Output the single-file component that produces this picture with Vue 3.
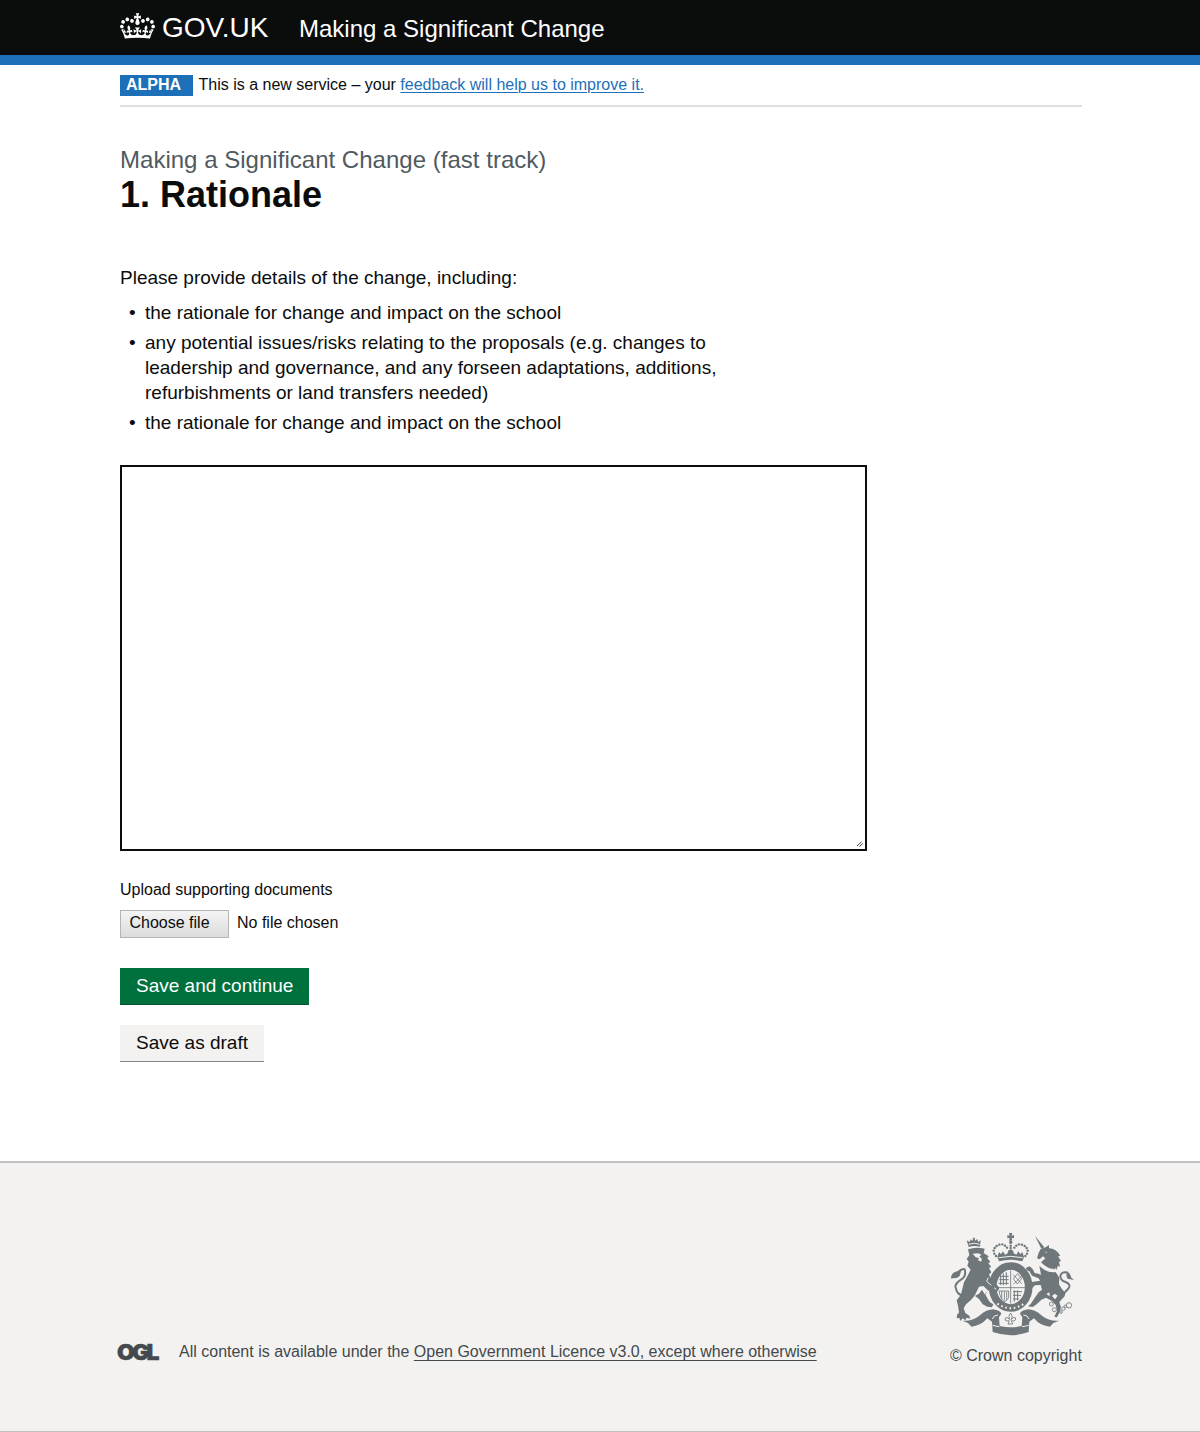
<script setup>
const points = [
  'the rationale for change and impact on the school',
  'any potential issues/risks relating to the proposals (e.g. changes to leadership and governance, and any forseen adaptations, additions, refurbishments or land transfers needed)',
  'the rationale for change and impact on the school'
]
// beads along the arches of the royal crown
const beads = [
  [163, 86], [161, 77], [164, 69], [170, 63], [178, 59], [187, 58], [195, 62], [201, 68],
  [261, 86], [263, 77], [260, 69], [254, 63], [246, 59], [237, 58], [229, 62], [223, 68],
  [212, 62], [212, 69], [212, 76], [168, 93], [256, 93]
]
</script>

<template>
  <div class="page">
    <header class="header">
      <div class="wrap header-row">
        <svg class="crown" viewBox="0 0 132 97" aria-hidden="true">
          <path fill="#fff" d="M25 30.2c3.5 1.5 7.7-.2 9.1-3.7 1.5-3.6-.2-7.8-3.9-9.2-3.6-1.4-7.6.3-9.1 3.9-1.4 3.5.3 7.5 3.9 9zM9 39.5c3.6 1.5 7.8-.2 9.2-3.7 1.5-3.6-.2-7.8-3.9-9.1-3.6-1.5-7.6.2-9.1 3.8-1.4 3.5.3 7.5 3.8 9zM4.4 57.2c3.5 1.5 7.7-.2 9.1-3.8 1.5-3.6-.2-7.7-3.9-9.1-3.5-1.5-7.6.3-9.1 3.8-1.4 3.5.3 7.6 3.9 9.1zm38.3-21.4c3.5 1.5 7.7-.2 9.1-3.8 1.5-3.6-.2-7.7-3.9-9.1-3.6-1.5-7.6.3-9.1 3.8-1.3 3.6.4 7.7 3.9 9.1zm64.4-5.6c-3.6 1.5-7.8-.2-9.1-3.7-1.5-3.6.2-7.8 3.8-9.2 3.6-1.4 7.7.3 9.2 3.9 1.3 3.5-.4 7.5-3.9 9zm15.9 9.3c-3.6 1.5-7.7-.2-9.1-3.7-1.5-3.6.2-7.8 3.7-9.1 3.6-1.5 7.7.2 9.2 3.8 1.5 3.5-.3 7.5-3.8 9zm4.7 17.7c-3.6 1.5-7.8-.2-9.2-3.8-1.5-3.6.2-7.7 3.9-9.1 3.6-1.5 7.7.3 9.2 3.8 1.3 3.5-.4 7.6-3.9 9.1zM89.3 35.8c-3.6 1.5-7.8-.2-9.2-3.8-1.4-3.6.2-7.7 3.9-9.1 3.6-1.5 7.7.3 9.2 3.8 1.4 3.6-.3 7.7-3.9 9.1zM69.7 17.7l8.9 4.7V9.3l-8.9 2.8c-.2-.3-.5-.6-.9-.9L72.4 0H59.6l3.5 11.2c-.3.3-.6.5-.9.9l-8.8-2.8v13.1l8.8-4.7c.3.3.6.7.9.9l-5 15.4v.1c-.2.8-.4 1.6-.4 2.4 0 4.1 3.1 7.5 7 8.1h.2c.3 0 .7.1 1 .1.4 0 .7 0 1-.1h.2c4-.6 7.1-4.1 7.1-8.1 0-.8-.1-1.7-.4-2.4V34l-5.1-15.4c.4-.2.7-.6 1-.9zM66 92.8c16.9 0 32.8 1.1 47.1 3.2 4-16.9 8.9-26.7 14-33.5l-9.6-3.4c1 4.9 1.1 7.2 0 10.2-1.5-1.4-3-4.3-4.2-8.7L108.6 76c2.8-2 5-3.2 7.5-3.3-4.4 9.4-10 11.9-13.6 11.2-4.3-.8-6.3-4.6-5.6-7.9 1-4.7 5.7-5.9 8-.5 4.3-8.7-3-11.4-7.6-8.8 7.1-7.2 7.9-13.5 2.1-21.1-8 6.1-8.1 12.3-4.5 20.8-4.7-5.4-12.1-2.5-9.5 6.2 3.4-5.2 7.9-2 7.2 3.1-.6 4.3-6.4 7.8-13.5 7.2-10.3-.9-10.9-8-11.2-13.8 2.5-.5 7.1 1.8 11 7.3L80.2 60c-4.1 4.4-8 5.3-12.3 5.4 1.4-4.4 8-11.6 8-11.6H55.5s6.4 7.2 7.9 11.6c-4.2-.1-8-1-12.3-5.4l1.4 16.4c3.9-5.5 8.5-7.7 10.9-7.3-.3 5.8-.9 12.8-11.1 13.8-7.2.6-12.9-2.9-13.5-7.2-.7-5 3.8-8.3 7.1-3.1 2.7-8.7-4.6-11.6-9.4-6.2 3.7-8.5 3.6-14.7-4.6-20.8-5.8 7.6-5 13.9 2.2 21.1-4.7-2.6-11.9.1-7.7 8.8 2.3-5.5 7.1-4.2 8.1.5.7 3.3-1.3 7.1-5.7 7.9-3.5.7-9-1.8-13.5-11.2 2.5.1 4.7 1.3 7.5 3.3l-4.7-15.4c-1.2 4.4-2.7 7.2-4.3 8.7-1.1-3-.9-5.3 0-10.2l-9.5 3.4c5 6.9 9.9 16.7 14 33.5 14.8-2.1 30.8-3.2 47.7-3.2z" />
        </svg>
        <span class="brand">GOV.UK</span>
        <span class="service">Making a Significant Change</span>
      </div>
    </header>

    <div class="wrap">
      <div class="phase">
        <strong class="tag">ALPHA</strong>
        <span>This is a new service – your <a>feedback will help us to improve it.</a></span>
      </div>

      <main>
        <div class="caption">Making a Significant Change (fast track)</div>
        <h1>1. Rationale</h1>
        <p class="lead">Please provide details of the change, including:</p>
        <ul>
          <li v-for="(p, i) in points" :key="i">{{ p }}</li>
        </ul>
        <div class="textarea">
          <svg width="6" height="6" viewBox="0 0 6 6"><path d="M0 5L4.5 .8M2.5 5.5L5.8 2.5" stroke="#444" stroke-width="1" fill="none" /></svg>
        </div>
        <div class="label">Upload supporting documents</div>
        <div class="file">
          <span class="choose">Choose file</span>
          <span>No file chosen</span>
        </div>
        <div class="btn primary">Save and continue</div>
        <div class="btn secondary">Save as draft</div>
      </main>
    </div>

    <footer>
      <div class="wrap footer-row">
        <div class="licence">
          <span class="ogl">OGL</span>
          <span>All content is available under the <a>Open Government Licence v3.0, except where otherwise</a></span>
        </div>
        <div class="copyright">
          <svg class="arms" viewBox="27 18 381 318" aria-hidden="true">
            <!-- royal crown -->
            <g class="ink">
              <path d="M207 24h10l-2 8 7-2v10l-7-2 2 9h-10l2-9-7 2V30l7 2z" />
              <circle cx="212" cy="52" r="5" />
              <circle v-for="(b, i) in beads" :key="i" :cx="b[0]" :cy="b[1]" r="3.6" />
              <path d="M172 96l5-15 6 7 6-9 6 10 8-4 2-9h14l2 9 8 4 6-10 6 9 6-7 5 15-5 13q-35-9-70 0z" />
            </g>
            <path class="cut-line" d="M176 98q36-8 72 0" />

            <!-- garter and shield -->
            <ellipse cx="212" cy="186" rx="54" ry="63" class="garter" />
            <path class="thin" d="M212 136v100M167 188h90" />
            <path class="charges" d="M181 154h25M178 164h28M176 175h30M182 150v30M190 145v36M199 142v38M219 200h27M219 211h24M219 222h17M223 196v34M233 196v30" />
            <path class="thin" d="M220 149l25 27M245 153l-25 25M233 146l12 15-13 16-12-16zM177 198h29v20q-7 12-13 12-12-8-16-32zM185 199v21M193 199v28M200 200v24" />
            <path class="cut-dots" d="M172 236q40 27 80 0" />

            <!-- lion -->
            <g class="ink">
              <path d="M86 66l-6-20 9 5 3-8 6 5 1-10h5l1 9 7-5 2 9 8-5-2 19q-17-5-34 1z" />
              <path d="M84 73Q108 64 134 71L131 84 146 94 142 100 151 110 145 115 154 126 147 129 154 142 147 148 152 160 166 174 178 188 174 198 160 202 146 196 136 208 142 220 150 232 160 238 156 247 142 245 128 238 117 222 104 212 92 226 78 238 71 250 76 264 88 272 91 281 80 278 76 286 68 280 61 288 58 279 50 280 51 270 57 262 54 242 50 226 62 210 66 196 72 172 84 150 92 134 82 122 86 110 80 102 88 90z" />
              <path d="M33 161q0-18 18-22l14-7-6 21q-7 8-18 6z" />
            </g>
            <path class="tail" d="M59 137q18-12 16 3 3 15-12 24-22 14-15 27 2 15 20 22" />
            <path class="cut" d="M98 86l16-1 11 4-7 5 8 9-3 7-9-4 3-7-10-2zM103 214l14-29 13-2 15 14-11 11-8-14-9 12z" />
            <path class="cut-line" d="M86 58q17-7 33 0M145 158l-5 11 14 12M162 188l7 5" />

            <!-- unicorn -->
            <g class="ink">
              <path d="M285 33l28 34-9 4z" />
              <path d="M302 72L317 67 327 60V70Q349 71 361 93L354 94 363 108 357 110 360 125 353 122 351 134Q324 135 303 112L316 100 309 94 299 103 291 100 296 83z" />
              <path d="M298 122Q320 145 347 141L358 158 357 178 364 190 376 204 374 214 364 224 358 232 363 246 359 262 351 277 343 275 351 258 347 240 336 228 318 218 304 224 290 238 278 246 264 244 272 237 286 216 296 202 306 194 302 180 285 181 276 190 268 183 275 171 300 167 296 160 276 152 268 139 260 136 258 128 269 124 278 132 284 144 303 149z" />
              <path d="M377 138q12 2 17 20l8 7-19-4q-7-10-1-17z" />
            </g>
            <path class="tail" d="M382 143q-17-5-21 9 0 15 16 19 19 9 7 21l-13 14" />
            <path class="cut" d="M336 213l8-7 9 6-8 11zM319 207l9-5 1 12zM316 80l5 1-3 4z" />
            <path class="collar" d="M301 117q26 24 54 15" />
            <g class="thin">
              <circle cx="293" cy="152" r="5" /><circle cx="350" cy="182" r="5" />
              <circle cx="334" cy="237" r="6" /><circle cx="343" cy="254" r="6" />
              <circle cx="370" cy="251" r="5" /><circle cx="376" cy="244" r="4" />
              <circle cx="387" cy="241" r="8" /><circle cx="363" cy="261" r="4" />
            </g>

            <!-- motto ribbon -->
            <path class="ribbon" d="M67 287Q95 290 118 272 140 253 160 253 180 256 184 266L177 277 179 303Q212 311 245 303L247 277 240 266Q244 256 264 253 284 253 306 272 329 290 357 287L340 294 330 305Q300 303 282 280L268 290 266 321Q212 340 158 321L156 290 142 280Q122 303 94 305L84 294z" />
            <path class="cut-line" d="M157 282q4-12 17-12M267 282q-4-12-17-12M158 301q10 3 20 4M266 301q-10 3-20 4" />
            <path class="thin" d="M212 264q-10 10-3 20-5-10-13-5-3 9 5 9l7-1-4 10h14l-4-10 7 1q9-2 5-10-9-3-12 6 6-10-2-20z" />
          </svg>
          <div>© Crown copyright</div>
        </div>
      </div>
    </footer>
  </div>
</template>

<style>
body { margin: 0; background: #fff; }
</style>

<style scoped>
.page {
  height: 1432px;
  box-sizing: border-box;
  display: flex;
  flex-direction: column;
  font-family: "Liberation Sans", Arial, sans-serif;
  color: #0b0c0c;
  font-size: 16px;
  overflow: hidden;
}
.wrap { width: 962px; margin-left: 120px; }
.header { height: 55px; background: #0b0c0c; border-bottom: 10px solid #1d70b8; color: #fff; }
.header-row { display: flex; white-space: nowrap; }
.crown { width: 35px; height: 26px; margin-top: 13px; }
.brand { width: 144px; padding-left: 7px; box-sizing: border-box; font-size: 28px; line-height: 55px; }
.service { font-size: 24px; line-height: 58px; }
.phase { display: flex; height: 40px; border-bottom: 2px solid #dedfe0; line-height: 40px; white-space: nowrap; }
.tag { width: 73px; height: 21px; margin: 10px 5.5px 0 0; padding-left: 6px; box-sizing: border-box; background: #1d70b8; color: #fff; line-height: 20px; }
.phase a { color: #1d70b8; text-decoration: underline; text-underline-offset: 2px; text-decoration-thickness: 1px; }
.caption { margin-top: 38px; font-size: 24px; line-height: 30px; letter-spacing: .02px; color: #505a5f; }
h1 { margin: 0; font-size: 36px; line-height: 40px; }
.lead { margin: 50px 0 0; font-size: 19px; line-height: 25px; }
ul { width: 605px; margin: 10px 0 0; padding: 0; list-style: none; font-size: 19px; line-height: 25px; }
li { padding-left: 25px; margin-bottom: 5px; }
li::before { content: "•"; float: left; width: 16px; margin-left: -16px; }
.textarea { width: 747px; height: 386px; margin-top: 30px; box-sizing: border-box; border: 2px solid #0b0c0c; display: flex; align-items: flex-end; justify-content: flex-end; padding: 2px; }
.label { margin-top: 29px; line-height: 20px; }
.file { display: flex; margin-top: 10px; line-height: 26px; }
.choose { width: 109px; height: 28px; margin-right: 8px; padding-left: 8.5px; box-sizing: border-box; line-height: 24px; border: 1px solid #b5b5b5; background: linear-gradient(#f4f4f4, #dcdcdc); }
.btn { font-size: 19px; padding-left: 16px; box-sizing: border-box; height: 37px; line-height: 35px; white-space: nowrap; }
.primary { margin-top: 30px; width: 189px; background: #00703c; color: #fff; border-bottom: 1px solid #00542d; }
.secondary { margin-top: 20px; width: 144px; background: #f3f2f1; border-bottom: 1px solid #858686; }
footer { margin-top: auto; height: 271px; box-sizing: border-box; background: #f3f2f1; border-top: 2px solid #bfc1c3; border-bottom: 1px solid #bfc1c3; color: #43494c; }
.footer-row { display: flex; justify-content: space-between; white-space: nowrap; }
.licence { display: flex; margin-top: 178px; line-height: 22px; }
.ogl { width: 62px; margin-left: -3px; font-family: Inter, sans-serif; font-weight: 900; font-size: 22px; letter-spacing: -2.6px; transform: scaleX(1.04); transform-origin: left; -webkit-text-stroke: .5px #43494c; }
.licence a { text-decoration: underline; text-underline-offset: 3px; text-decoration-thickness: 1px; }
.copyright { width: 132px; padding-top: 68px; }
.copyright div { line-height: 20px; margin-top: 9px; }
.arms { display: block; width: 127px; height: 106px; margin-left: -1px; }
.ink { fill: #6f777b; }
.ribbon { fill: #6f777b; stroke: #f3f2f1; stroke-width: 5; paint-order: stroke; }
.cut { fill: #f3f2f1; }
.cut-line { fill: none; stroke: #f3f2f1; stroke-width: 3; }
.cut-dots { fill: none; stroke: #f3f2f1; stroke-width: 6; stroke-dasharray: 5 8; }
.garter { fill: none; stroke: #6f777b; stroke-width: 23; }
.thin { fill: none; stroke: #6f777b; stroke-width: 2.5; }
.charges { fill: none; stroke: #6f777b; stroke-width: 3; }
.tail { fill: none; stroke: #6f777b; stroke-width: 6; }
.collar { fill: none; stroke: #f3f2f1; stroke-width: 7; stroke-dasharray: 5 3; }
</style>
